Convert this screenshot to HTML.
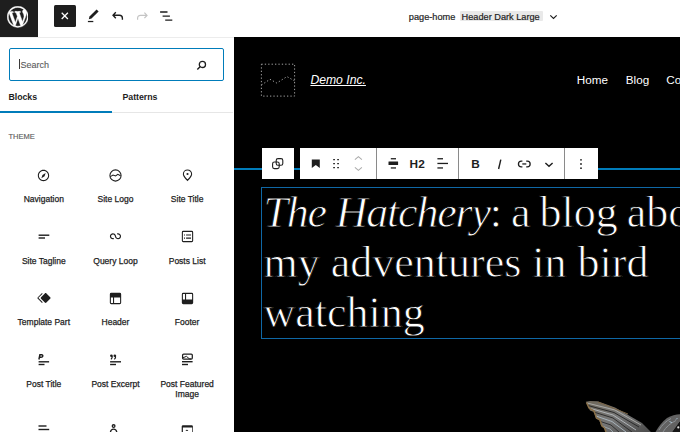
<!DOCTYPE html>
<html><head><meta charset="utf-8">
<style>
*{margin:0;padding:0;box-sizing:border-box}
html,body{width:680px;height:432px;overflow:hidden;background:#fff;font-family:"Liberation Sans",sans-serif;color:#1e1e1e}
.a{position:absolute}
svg{position:absolute;display:block}
#hdr{left:0;top:0;width:680px;height:37.6px;background:#fff;border-bottom:1.2px solid #ececec}
#wplogo{left:0;top:0;width:37.5px;height:36.8px;background:#1e1e1e}
#closebtn{left:54px;top:5.3px;width:21.5px;height:21.4px;background:#1e1e1e;border-radius:1.5px}
.ttl{font-size:9.2px;white-space:nowrap;top:10.9px;line-height:12px;-webkit-text-stroke:0.2px #1e1e1e}
#badge{left:460px;top:11.4px;width:82.5px;height:9.6px;background:#e9e9e9;border-radius:1px}
#side{left:0;top:37.6px;width:234px;height:395px;background:#fff}
#search{left:8.7px;top:47.9px;width:215px;height:32.8px;border:1.5px solid #007cba;border-radius:2px}
.tab{font-weight:bold;font-size:8.8px;top:91.1px;line-height:12px;white-space:nowrap;letter-spacing:-0.05px}
.lbl{font-size:8.5px;line-height:10px;text-align:center;width:71.67px;white-space:nowrap;-webkit-text-stroke:0.25px #1e1e1e}
#canvas{left:234px;top:37.2px;width:446px;height:395px;background:#000;overflow:hidden}
.tb{background:#fff;top:147.6px;height:31.6px}
.sep{background:#8a8a8a;width:1px;top:147.6px;height:31.6px}
h2{font-family:"Liberation Serif",serif;font-weight:normal;color:#fff;-webkit-text-stroke:0.8px #000;font-size:44px;line-height:50px;white-space:nowrap}
</style></head><body>
<div id="hdr" class="a"></div>
<div id="wplogo" class="a">
<svg style="left:6.7px;top:6px" width="21.6" height="21.6" viewBox="-0.2 -0.2 20.4 20.4"><path fill="#fff" stroke="#fff" stroke-width="0.4" d="M20 10c0-5.51-4.49-10-10-10C4.48 0 0 4.49 0 10c0 5.52 4.48 10 10 10 5.51 0 10-4.48 10-10zM7.780 15.370L4.370 6.220c.55-.02 1.170-.08 1.170-.08.5-.06.44-1.130-.06-1.110 0 0-1.450.11-2.370.11-.18 0-.37 0-.58-.01C4.120 2.690 6.870 1.110 10 1.110c2.330 0 4.450.87 6.050 2.340-.68-.11-1.650.39-1.650 1.580 0 .74.45 1.360.9 2.100.35.61.55 1.360.55 2.460 0 1.490-1.400 5-1.400 5l-3.030-8.370c.54-.02.82-.17.82-.17.5-.05.44-1.250-.06-1.220 0 0-1.440.12-2.380.12-.87 0-2.330-.12-2.330-.12-.5-.03-.56 1.200-.06 1.220l.92.08 1.260 3.410zM17.410 10c.24-.64.74-1.870.43-4.250.7 1.290 1.050 2.710 1.050 4.250 0 3.290-1.730 6.240-4.400 7.780.97-2.590 1.940-5.200 2.920-7.780zM6.100 18.090C3.120 16.650 1.110 13.530 1.110 10c0-1.300.23-2.480.72-3.590C3.250 10.300 4.670 14.200 6.100 18.090zm4.030-6.630l2.580 6.980c-.86.29-1.760.45-2.710.45-.79 0-1.570-.11-2.290-.33.81-2.380 1.620-4.740 2.420-7.100z"/></svg>
</div>
<div id="closebtn" class="a">
<svg style="left:0;top:0" width="21.5" height="21.4" viewBox="0 0 21.5 21.4"><path d="M7.7 7.8l6.2 6.2M13.9 7.8l-6.2 6.2" stroke="#fff" stroke-width="1.25"/></svg>
</div>
<!-- pen -->
<svg style="left:84px;top:6px" width="18" height="20" viewBox="84 6 18 20"><path d="M96.6 9.6L98.6 11.6L91.5 18.6L88.8 19.3L89.5 16.6Z" fill="#1e1e1e"/><rect x="87.9" y="20.9" width="5.4" height="1.25" fill="#1e1e1e"/></svg>
<!-- undo -->
<svg style="left:111px;top:10.4px" width="14" height="12" viewBox="0 0 14 12"><path d="M4.8 2.2L2 5.2l2.8 3M2.4 5.2h6c1.8 0 3 1.2 3 3v1.6" fill="none" stroke="#1e1e1e" stroke-width="1.35"/></svg>
<!-- redo -->
<svg style="left:135px;top:10.2px" width="14" height="12" viewBox="0 0 14 12"><path d="M9.4 2.7L12 5.4l-2.6 2.7M11.6 5.4h-6.2c-1.7 0-2.8 1.1-2.8 2.8v1.6" fill="none" stroke="#c4c4c4" stroke-width="1.2"/></svg>
<!-- list view -->
<svg style="left:155px;top:6px" width="25" height="20" viewBox="155 6 25 20"><path d="M160.1 12h7.4M162.6 16.1h7.3M165.2 20.1h7.1" stroke="#1e1e1e" stroke-width="1.45"/></svg>
<!-- title -->
<div class="a ttl" style="left:408.8px">page-home</div>
<div id="badge" class="a"></div>
<div class="a ttl" style="left:461.6px">Header Dark Large</div>
<svg style="left:548px;top:12px" width="11" height="9" viewBox="0 0 11 9"><path d="M2.3 3.4l3.2 3 3.2-3" fill="none" stroke="#1e1e1e" stroke-width="1.2"/></svg>

<!-- sidebar -->
<div id="side" class="a"></div>
<div id="search" class="a"></div>
<div class="a" style="left:19.3px;top:59.2px;width:1px;height:10.2px;background:#3a3a3a"></div>
<div class="a" style="left:20.6px;top:58.5px;font-size:9px;line-height:12px;color:#5c5c5c;-webkit-text-stroke:0.12px #5c5c5c">Search</div>
<svg style="left:195px;top:58.5px" width="13" height="12" viewBox="0 0 13 12"><circle cx="7.4" cy="5.4" r="3.1" fill="none" stroke="#1e1e1e" stroke-width="1.3"/><path d="M5.3 7.6L2.3 10.6" stroke="#1e1e1e" stroke-width="1.4"/></svg>
<div class="a tab" style="left:8.5px">Blocks</div>
<div class="a tab" style="left:122.5px">Patterns</div>
<div class="a" style="left:0;top:111.9px;width:232.8px;height:1.2px;background:#e6e6e6"></div>
<div class="a" style="left:0;top:110.5px;width:111.6px;height:2.2px;background:#007cba"></div>
<div class="a" style="left:8.5px;top:132.1px;font-size:7.5px;line-height:10px;color:#5e5e5e;-webkit-text-stroke:0.15px #5e5e5e">THEME</div>

<div id="grid">
<svg style="left:35.33px;top:166.50px" width="17" height="17" viewBox="0 0 24 24" fill="#1e1e1e"><path d="M12 4c-4.4 0-8 3.6-8 8s3.6 8 8 8 8-3.6 8-8-3.6-8-8-8zm0 14.5c-3.6 0-6.5-2.9-6.5-6.5S8.4 5.5 12 5.5s6.5 2.9 6.5 6.5-2.9 6.5-6.5 6.5zM9 16l4.5-3L15 8.4l-4.5 3L9 16z"/></svg>
<div class="a lbl" style="left:8.00px;top:194.10px">Navigation</div>
<svg style="left:107.00px;top:166.50px" width="17" height="17" viewBox="0 0 24 24" fill="#1e1e1e"><circle cx="12" cy="12" r="7.9" fill="none" stroke="#1e1e1e" stroke-width="1.5"/><path d="M4.6 13.6l3.9-2.2 3.6 1.3 3.2-2.3 3.9 2" fill="none" stroke="#1e1e1e" stroke-width="1.5"/></svg>
<div class="a lbl" style="left:79.67px;top:194.10px">Site Logo</div>
<svg style="left:178.67px;top:166.50px" width="17" height="17" viewBox="0 0 24 24" fill="#1e1e1e"><path d="M12 4.2c-3.2 0-5.8 2.5-5.8 5.6 0 .7.1 1.3.35 1.9C7.3 14 12 19 12 19s4.7-5 5.45-7.3c.25-.6.35-1.2.35-1.9 0-3.1-2.6-5.6-5.8-5.6z" fill="none" stroke="#1e1e1e" stroke-width="1.5"/><circle cx="12" cy="9.8" r="1.5"/></svg>
<div class="a lbl" style="left:151.34px;top:194.10px">Site Title</div>
<svg style="left:32px;top:226px" width="24" height="22" viewBox="32 226 24 22" fill="#1e1e1e"><rect x="38.6" y="234.5" width="10.7" height="1.4"/><rect x="38.6" y="237.3" width="6.4" height="1.4"/></svg>
<div class="a lbl" style="left:8.00px;top:255.70px">Site Tagline</div>
<svg style="left:107.00px;top:228.00px" width="17" height="17" viewBox="0 0 24 24" fill="#1e1e1e"><path d="M18.1823 11.6392C18.1823 13.0804 17.0139 14.2487 15.5727 14.2487C14.3579 14.2487 13.335 13.4179 13.0453 12.2922L13.0377 12.2625L13.0278 12.2335L12.3985 10.377L12.3942 10.3785C11.8571 8.64997 10.246 7.39405 8.33961 7.39405C5.99509 7.39405 4.09448 9.29465 4.09448 11.6392C4.09448 13.9837 5.99509 15.8843 8.33961 15.8843C8.88499 15.8843 9.40822 15.781 9.88943 15.5923L9.29212 14.0697C8.99812 14.185 8.67729 14.2487 8.33961 14.2487C6.89838 14.2487 5.73003 13.0804 5.73003 11.6392C5.73003 10.1979 6.89838 9.02959 8.33961 9.02959C9.55444 9.02959 10.5773 9.86046 10.867 10.9862L10.8772 10.9836L11.4695 12.7311C11.9515 14.546 13.6048 15.8843 15.5727 15.8843C17.9172 15.8843 19.8178 13.9837 19.8178 11.6392C19.8178 9.29465 17.9172 7.39404 15.5727 7.39404C15.0287 7.39404 14.5066 7.4968 14.0264 7.6847L14.6223 9.20781C14.9158 9.093 15.2358 9.02959 15.5727 9.02959C17.0139 9.02959 18.1823 10.1979 18.1823 11.6392Z"/></svg>
<div class="a lbl" style="left:79.67px;top:255.70px">Query Loop</div>
<svg style="left:178.67px;top:228.00px" width="17" height="17" viewBox="0 0 24 24" fill="#1e1e1e"><path d="M18 5.5H6a.5.5 0 0 0-.5.5v12a.5.5 0 0 0 .5.5h12a.5.5 0 0 0 .5-.5V6a.5.5 0 0 0-.5-.5ZM6 4h12a2 2 0 0 1 2 2v12a2 2 0 0 1-2 2H6a2 2 0 0 1-2-2V6a2 2 0 0 1 2-2Zm1 5h1.5v1.5H7V9Zm1.5 4.5H7V15h1.5v-1.5ZM10 9h7v1.5h-7V9Zm7 4.5h-7V15h7v-1.5Z"/></svg>
<div class="a lbl" style="left:151.34px;top:255.70px">Posts List</div>
<svg style="left:36.0px;top:289.8px" width="16" height="16" viewBox="0 0 24 24" fill="#1e1e1e"><path d="M21.3 10.8l-5.6-5.6c-.7-.7-1.8-.7-2.5 0l-5.6 5.6c-.7.7-.7 1.8 0 2.5l5.6 5.6c.3.3.8.5 1.2.5s.9-.2 1.2-.5l5.6-5.6c.8-.7.8-1.9.1-2.5zm-17.6 1L10 5.5l-1-1-6.3 6.3c-.7.7-.7 1.8 0 2.5L9 19.5l1.1-1.1-6.3-6.3c-.2 0-.2-.2-.1-.3z"/></svg>
<div class="a lbl" style="left:8.00px;top:317.40px">Template Part</div>
<svg style="left:107.00px;top:289.50px" width="17" height="17" viewBox="0 0 24 24" fill="#1e1e1e"><path d="M18.5 10.5H10v8h8a.5.5 0 00.5-.5v-7.5zm-10 0h-3V18a.5.5 0 00.5.5h2.5v-8zM6 4h12a2 2 0 012 2v12a2 2 0 01-2 2H6a2 2 0 01-2-2V6a2 2 0 012-2z"/></svg>
<div class="a lbl" style="left:79.67px;top:317.40px">Header</div>
<svg style="left:178.67px;top:289.50px" width="17" height="17" viewBox="0 0 24 24" fill="#1e1e1e"><path fill-rule="evenodd" d="M18 5.5h-8v8h8.5V6a.5.5 0 00-.5-.5zm-9.5 8h-3V6a.5.5 0 01.5-.5h2.5v8zM6 4h12a2 2 0 012 2v12a2 2 0 01-2 2H6a2 2 0 01-2-2V6a2 2 0 012-2z"/></svg>
<div class="a lbl" style="left:151.34px;top:317.40px">Footer</div>
<svg style="left:32px;top:348px" width="24" height="22" viewBox="32 348 24 22" fill="#1e1e1e"><path d="M38.9 359.5L39.9 354.8H41.6C42.6 354.8 42.9 355.4 42.8 356.1C42.65 356.9 41.9 357.3 41.0 357.3H39.5" fill="none" stroke="#1e1e1e" stroke-width="1.45"/><rect x="38.6" y="361.1" width="10.5" height="1.4"/><rect x="38.6" y="363.8" width="5.9" height="1.4"/></svg>
<div class="a lbl" style="left:8.00px;top:378.70px">Post Title</div>
<svg style="left:104px;top:348px" width="24" height="22" viewBox="104 348 24 22" fill="#1e1e1e"><circle cx="111.4" cy="355.7" r="1.3"/><circle cx="114.8" cy="355.7" r="1.3"/><path d="M112.1 355.9c.3 1.3-.1 2.6-1.1 3.5M115.5 355.9c.3 1.3-.1 2.6-1.1 3.5" fill="none" stroke="#1e1e1e" stroke-width="1.2"/><rect x="110.1" y="361.1" width="10.9" height="1.4"/><rect x="110.1" y="363.8" width="5.9" height="1.4"/></svg>
<div class="a lbl" style="left:79.67px;top:378.70px">Post Excerpt</div>
<svg style="left:176px;top:348px" width="24" height="22" viewBox="176 348 24 22" fill="#1e1e1e"><rect x="182.6" y="354" width="9.7" height="5" rx="1.1" fill="none" stroke="#1e1e1e" stroke-width="1.25"/><path d="M182.8 357.9L186.4 356.3L189.2 358.7L191 359" fill="none" stroke="#1e1e1e" stroke-width="1"/><rect x="182" y="361" width="10.6" height="1.4"/><rect x="182" y="363.8" width="6" height="1.4"/></svg>
<div class="a lbl" style="left:151.34px;top:378.70px">Post Featured<br>Image</div>
<svg style="left:32px;top:416px" width="24" height="16" viewBox="32 416 24 16" fill="#1e1e1e"><rect x="38.5" y="425.3" width="8" height="1.4"/><rect x="38.5" y="428.8" width="10.7" height="1.4"/></svg>
<svg style="left:104px;top:416px" width="24" height="16" viewBox="104 416 24 16" fill="#1e1e1e"><circle cx="113.6" cy="426.1" r="1.35" fill="none" stroke="#1e1e1e" stroke-width="1.3"/><path d="M110.4 432.2C110.7 430.2 111.9 429.1 113.6 429.1C115.3 429.1 116.5 430.2 116.8 432.2" fill="none" stroke="#1e1e1e" stroke-width="1.3"/></svg>
<svg style="left:176px;top:416px" width="24" height="16" viewBox="176 416 24 16" fill="#1e1e1e"><path d="M183 425.2h8.6a1.3 1.3 0 0 1 1.3 1.3V434h-11.2v-7.5a1.3 1.3 0 0 1 1.3-1.3zM182.9 427.6V434h9.3v-6.4z" fill-rule="evenodd"/><path d="M185.9 430.6c.5-.5 1.5-.5 2 .1" fill="none" stroke="#1e1e1e" stroke-width="1.2"/></svg>
</div>

<!-- canvas -->
<div id="canvas" class="a"></div>
<!-- site logo placeholder -->
<svg style="left:260px;top:63px" width="36" height="35" viewBox="0 0 36 35"><rect x="1.4" y="1.2" width="33.2" height="31.9" fill="none" stroke="#a0a0a0" stroke-width="1" stroke-dasharray="1.3 2.1"/><path d="M1.4 22 L10 16.3 L16.8 20 L27 13.6 L34.6 17.9" fill="none" stroke="#a0a0a0" stroke-width="1" stroke-dasharray="1.3 2.1"/></svg>
<div class="a" style="left:310.4px;top:72.9px;font-size:12.2px;line-height:14px;font-style:italic;color:#fff;text-decoration:underline;white-space:nowrap">Demo Inc.</div>
<div class="a" style="left:576.8px;top:73.3px;font-size:11.7px;line-height:14px;color:#fff;white-space:nowrap">Home</div>
<div class="a" style="left:625.8px;top:73.3px;font-size:11.7px;line-height:14px;color:#fff;white-space:nowrap">Blog</div>
<div class="a" style="left:666.3px;top:73.3px;font-size:11.7px;line-height:14px;color:#fff;white-space:nowrap">Contact</div>
<!-- blue line -->
<div class="a" style="left:234px;top:168.4px;width:446px;height:2px;background:#007cba"></div>
<!-- toolbar -->
<div class="a tb" style="left:261.7px;width:32px"></div>
<div class="a tb" style="left:299.7px;width:298.3px"></div>
<div class="a sep" style="left:376.2px"></div>
<div class="a sep" style="left:458.3px"></div>
<div class="a sep" style="left:564px"></div>
<!-- duplicate icon -->
<svg style="left:270px;top:155.5px" width="16" height="16" viewBox="0 0 16 16"><rect x="2.6" y="6.0" width="6.6" height="6.6" rx="1.8" fill="none" stroke="#1e1e1e" stroke-width="1.1"/><rect x="6.2" y="2.6" width="6.6" height="6.6" rx="1.8" fill="none" stroke="#1e1e1e" stroke-width="1.1"/></svg>
<!-- bookmark -->
<svg style="left:308px;top:155.5px" width="16" height="16" viewBox="0 0 16 16"><path d="M3.8 3.5h8v8.4l-4-2.8-4 2.8z" fill="#1e1e1e"/></svg>
<!-- drag -->
<svg style="left:328px;top:155px" width="16" height="16" viewBox="0 0 16 16"><g fill="#1e1e1e"><rect x="5.1" y="3.9" width="1.9" height="1.4" rx=".5"/><rect x="9.1" y="3.9" width="1.9" height="1.4" rx=".5"/><rect x="5.1" y="7.9" width="1.9" height="1.4" rx=".5"/><rect x="9.1" y="7.9" width="1.9" height="1.4" rx=".5"/><rect x="5.1" y="11.9" width="1.9" height="1.4" rx=".5"/><rect x="9.1" y="11.9" width="1.9" height="1.4" rx=".5"/></g></svg>
<!-- up/down -->
<svg style="left:350.2px;top:153px" width="17" height="20" viewBox="0 0 17 20"><path d="M4.9 6.7L8.4 3.6L11.9 6.7M4.9 14.3L8.4 17.3L11.9 14.3" fill="none" stroke="#ababab" stroke-width="1.05"/></svg>
<!-- align (wide) -->
<svg style="left:385px;top:155px" width="16" height="16" viewBox="0 0 16 16"><g fill="#1e1e1e"><rect x="5.8" y="3.1" width="5.2" height="1.3"/><rect x="3.5" y="6.5" width="9.6" height="3.6" rx=".3"/><rect x="5.8" y="12.3" width="5.2" height="1.3"/></g></svg>
<div class="a" style="left:409.6px;top:156.5px;font-size:11.8px;line-height:14px;font-weight:bold;white-space:nowrap;letter-spacing:0.2px">H2</div>
<!-- text align -->
<svg style="left:434px;top:155px" width="16" height="16" viewBox="0 0 16 16"><g fill="#1e1e1e"><rect x="3.4" y="3.1" width="5.6" height="1.3"/><rect x="3.4" y="7.8" width="10.6" height="1.3"/><rect x="3.4" y="12.3" width="5.6" height="1.3"/></g></svg>
<div class="a" style="left:471.2px;top:156.5px;font-size:11.8px;line-height:14px;font-weight:bold;white-space:nowrap">B</div>
<svg style="left:494px;top:155.5px" width="12" height="16" viewBox="0 0 12 16"><path d="M6.8 3.6L4.6 13" stroke="#1e1e1e" stroke-width="1.4"/></svg>
<!-- link -->
<svg style="left:515.5px;top:155.5px" width="17" height="16" viewBox="0 0 17 16"><path d="M6.4 5.1H5.3a2.85 2.85 0 0 0 0 5.7h1.1M10.2 5.1h1.1a2.85 2.85 0 0 1 0 5.7h-1.1" fill="none" stroke="#1e1e1e" stroke-width="1.3"/><rect x="6.3" y="7.3" width="4" height="1.3" fill="#1e1e1e"/></svg>
<svg style="left:542.5px;top:158.5px" width="12" height="10" viewBox="0 0 12 10"><path d="M2.4 3.9l3.6 3.4 3.6-3.4" fill="none" stroke="#1e1e1e" stroke-width="1.4"/></svg>
<!-- more -->
<svg style="left:575px;top:155.5px" width="12" height="16" viewBox="0 0 12 16"><g fill="#1e1e1e"><circle cx="6" cy="3.8" r=".9"/><circle cx="6" cy="8" r=".9"/><circle cx="6" cy="12.2" r=".9"/></g></svg>
<!-- heading block border -->
<div class="a" style="left:261.1px;top:187.1px;width:430px;height:151.7px;border:1.6px solid #0f68a6"></div>
<h2 class="a" style="left:263.5px;top:187.9px"><i style="letter-spacing:-1.2px">The Hatchery</i><span style="word-spacing:-2px">: a blog about</span><br>my adventures in bird<br>watching</h2>
<!-- bird wing -->
<svg style="left:570px;top:390px" width="110" height="42" viewBox="570 390 110 42">
<defs><linearGradient id="wg" x1="0" y1="0" x2="1" y2="1"><stop offset="0" stop-color="#6e675a"/><stop offset="0.5" stop-color="#777"/><stop offset="1" stop-color="#4a4a4a"/></linearGradient></defs>
<path d="M585.8 401.8L590 401 597.6 401.2 615 407.5 642 423 651 432 606 432 604 427 601 425.5 599.5 420 596 418.5 594 412 590 410.5 588.5 407z" fill="url(#wg)"/>
<g fill="none" stroke-width="1">
<path d="M587 403L615 410 641 425" stroke="#a9a9a6"/>
<path d="M588 405.5L614 412.5 639 427" stroke="#2a2a2a"/>
<path d="M589 408L613 415 636 430" stroke="#b0b4b8"/>
<path d="M592 411.5L613 418 632 432" stroke="#2e2e2e"/>
<path d="M596 416L612 421.5 626 432" stroke="#a8b4bc"/>
<path d="M599 421L611 425 619 432" stroke="#303030"/>
<path d="M602 426L610 429 613 432" stroke="#9aa4aa"/>
<path d="M586.5 402.5L589 408 594 411 596.5 418 600 420 602 426 604.5 428 606 432" stroke="#8a7048" stroke-width="1.5"/>
<path d="M598 402L628 414" stroke="#7a6444"/>
</g>
<path d="M655.5 432C659 426 662 422 667 418C671 415.5 676 414.3 680 414.2V421.5L672.5 432Z" fill="#626262"/>
<path d="M659 430C662 425 666 421 671 418.5M663 432C666 427 670 423.5 676 420.5" fill="none" stroke="#8e9296" stroke-width="1"/>
<path d="M669.5 421.5l2.5 1.2M676 419.5l1.5-1.5" stroke="#a8c0d0" stroke-width="1"/>
<path d="M672.5 432L680 421.5V432Z" fill="#161616"/>
<circle cx="678.3" cy="427.4" r="1.1" fill="#e0e0e0"/>
</svg>

</body></html>
